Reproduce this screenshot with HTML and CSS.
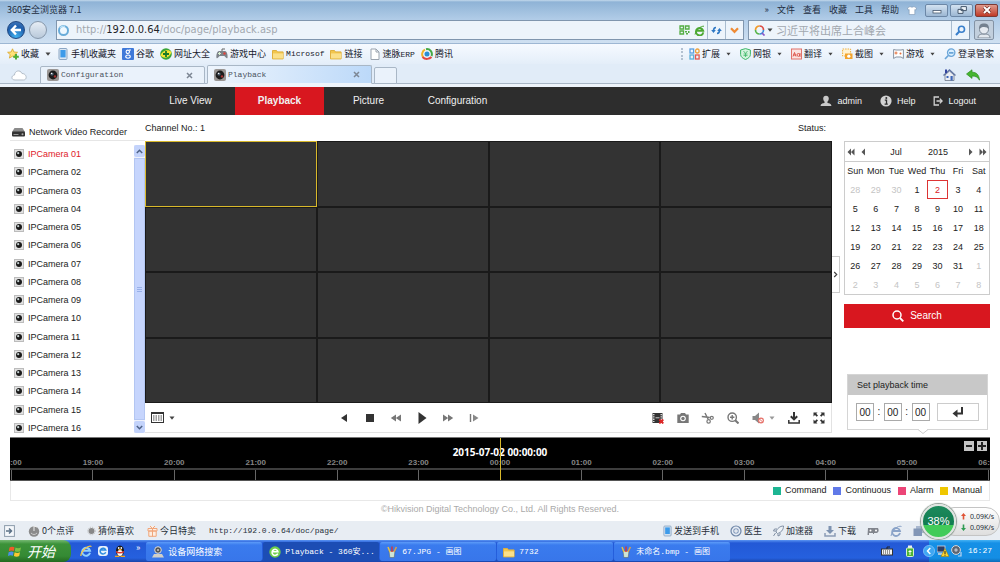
FILE: index.html
```html
<!DOCTYPE html>
<html lang="en">
<head>
<meta charset="utf-8">
<title>Playback</title>
<link rel="stylesheet" href="styles.css">
</head>
<body>
<svg class="defs" aria-hidden="true">
  <symbol id="cam" viewBox="0 0 10 10"><rect x=".5" y=".5" width="9" height="9" fill="#e2e2e2" stroke="#bcbcbc"/><circle cx="5" cy="5" r="3" fill="#1a1a1a"/><circle cx="4.200" cy="4.200" r="1.100" fill="#c4d0d0"/></symbol>
  <symbol id="lens" viewBox="0 0 12 12"><rect width="12" height="12" rx="2" fill="#9a9694"/><circle cx="6" cy="6" r="4.400" fill="#1c1c1c"/><circle cx="5" cy="5" r="1.600" fill="#567"/><circle cx="8" cy="7.400" r="1.200" fill="#a33"/><circle cx="4.600" cy="4.400" r=".7" fill="#fff"/></symbol>
  <symbol id="folder" viewBox="0 0 12 12"><path d="M.5 2.500h4l1 1.400h5.600v7H.5z" fill="#f2c64d" stroke="#dfb040"/><path d="M1 5.400h10v5H1z" fill="#fbe08a"/></symbol>
  <symbol id="caret" viewBox="0 0 6 4"><path d="M.5.5h5L3 3.700z" fill="currentColor"/></symbol>
  <symbol id="paint" viewBox="0 0 12 12"><path d="M3 5h6l-.8 6.500H3.800z" fill="#cfe4d4" stroke="#567" stroke-width=".6"/><path d="M4 6 2 1" stroke="#e8c040" stroke-width="1.500"/><path d="M6 6V.5" stroke="#d33" stroke-width="1.400"/><path d="m8 6 2.400-5" stroke="#d9a04a" stroke-width="1.600"/></symbol>
  <symbol id="phone" viewBox="0 0 10 12"><rect x="1" y=".5" width="8" height="11" rx="1" fill="#dbe7f3" stroke="#8ba6c4"/><rect x="2.400" y="2" width="5.200" height="7.400" fill="#3d9bea"/></symbol>
</svg>

<header class="browser">
  <div class="titlebar">
    <span class="title">360安全浏览器 7.1</span>
    <nav class="menus"><button>»</button><button>文件</button><button>查看</button><button>收藏</button><button>工具</button><button>帮助</button>
      <button aria-label="Skins"><svg width="10" height="9" viewBox="0 0 10 9"><path d="M3 .6Q5 2 7 .6L9.600 2 8.600 4 7.800 3.600V8.500H2.200V3.600L1.400 4 .4 2z" fill="#fff" stroke="#6d87a5" stroke-width=".5"/></svg></button>
    </nav>
    <div class="wincontrols">
      <button aria-label="Minimize"><svg width="10" height="8" viewBox="0 0 10 8"><rect x="1" y="4.500" width="8" height="2.500" fill="#fff" stroke="#46586d" stroke-width=".8"/></svg></button>
      <button aria-label="Restore"><svg width="10" height="8" viewBox="0 0 10 8"><path d="M4 .6h5.400v4H4zM1 3.400h5v4H1z" fill="#eef4fa" stroke="#46586d"/></svg></button>
      <button class="close" aria-label="Close"><svg width="10" height="8" viewBox="0 0 10 8"><path d="m2 1 6 6M8 1 2 7" stroke="#6e2a22" stroke-width="3.200"/><path d="m2 1 6 6M8 1 2 7" stroke="#fff" stroke-width="2"/></svg></button>
    </div>
  </div>

  <div class="addressrow">
    <button class="round back" aria-label="Back"><svg width="12" height="12" viewBox="0 0 12 12"><path d="M11 6H2M6 1.500 1.800 6 6 10.500" fill="none" stroke="#fff" stroke-width="2.400"/></svg></button>
    <button class="round" aria-label="Forward"></button>
    <div class="address">
      <svg width="13" height="13" viewBox="0 0 13 13"><circle cx="6.500" cy="6.500" r="4.500" fill="#eef8ff" stroke="#69acd9" stroke-width="2"/><path d="M3 4A4.500 4.500 0 0 1 8 2.400" fill="none" stroke="#b9e0f7" stroke-width="1.400"/></svg>
      <span class="url">http://<b>192.0.0.64</b>/doc/page/playback.asp</span>
      <button class="tool" aria-label="QR code"><svg width="11" height="10" viewBox="0 0 11 10"><path d="M1 1h3.500v3H1zM6.500 1H10v3H6.500zM1 6h3.500v3H1z" fill="none" stroke="#53ad43" stroke-width="1.300"/><path d="M6 6h2v1.500H6zM9 6h1.500v2H9zM7 8h2v1.500H7z" fill="#53ad43"/></svg></button>
      <button class="tool" aria-label="Compatibility"><svg width="11" height="11" viewBox="0 0 11 11"><path d="M9.300 7.400A3.700 3.700 0 1 1 9.200 5.700H3" fill="none" stroke="#4ca832" stroke-width="1.900"/><path d="M1 9.500C2.500 4 7 1 10 1.200" fill="none" stroke="#4ca832"/></svg></button>
      <button class="seg" aria-label="Refresh"><svg width="11" height="11" viewBox="0 0 11 11"><path d="M5 2.500C3 2.500 2.500 4 2.500 6M6 8.500c2 0 2.500-1.500 2.500-3.500" fill="none" stroke="#2f78c4" stroke-width="1.600"/><path d="M.2 5h4.600L2.500 8zM6.200 6h4.600L8.500 3z" fill="#2f78c4"/></svg></button>
      <button class="seg" aria-label="History"><svg width="9" height="7" viewBox="0 0 9 7"><path d="m1 1.200 3.500 3.600L8 1.200" fill="none" stroke="#ef8b35" stroke-width="2.200"/></svg></button>
    </div>
    <div class="websearch">
      <svg width="12" height="12" viewBox="0 0 12 12" fill="none" stroke-width="1.700"><path d="M1.500 6A4 4 0 0 1 5.500 2" stroke="#f09b2a"/><path d="M5.500 2a4 4 0 0 1 4 4" stroke="#dd4c43"/><path d="M9.500 6a4 4 0 0 1-4 4" stroke="#3b8ddb"/><path d="M5.500 10a4 4 0 0 1-4-4" stroke="#58b548"/><path d="m8 9 2.500 2.500" stroke="#8a55c5"/></svg>
      <svg class="caret" width="6" height="4"><use href="#caret"/></svg>
      <input type="text" placeholder="习近平将出席上合峰会" aria-label="Web search">
      <button class="seg" aria-label="Search the web"><svg width="11" height="11" viewBox="0 0 11 11"><circle cx="6.500" cy="4.300" r="3" fill="none" stroke="#3a7fcb" stroke-width="1.600"/><path d="M4.300 6.500 1 10" stroke="#3a7fcb" stroke-width="2"/></svg></button>
    </div>
    <button class="avatar" aria-label="Account"><svg width="16" height="16" viewBox="0 0 16 16"><path d="M2 16c0-3 2-4 6-4s6 1 6 4z" fill="#e3e8ee" stroke="#7c8896"/><circle cx="8" cy="7.500" r="4.500" fill="#e6eaf0" stroke="#7c8896"/><path d="M3 7C3 2.500 5 1.500 8 1.500S13 2.500 13 7C11 4.500 6 4 3 7z" fill="#75818f"/></svg></button>
  </div>

  <div class="bookmarks">
    <div class="bookgroup">
      <a href="#"><svg width="12" height="12" viewBox="0 0 12 12"><path d="m5.500.8 1.400 3.200 3.600.3-2.700 2.300.8 3.500-3.100-1.900-3.100 1.900.8-3.500L.6 4.300l3.500-.3z" fill="#ffe27a" stroke="#d9a527" stroke-width=".8"/><path d="M9 6v5.600M6.200 8.800h5.600" stroke="#4fae38" stroke-width="2"/></svg>收藏<svg class="caret spaced" width="6" height="4"><use href="#caret"/></svg></a>
      <a href="#"><svg width="12" height="12"><use href="#phone"/></svg>手机收藏夹</a>
      <a href="#"><svg width="12" height="12" viewBox="0 0 12 12"><rect width="12" height="12" rx="1" fill="#3f79d9"/><circle cx="5.800" cy="3.800" r="1.700" fill="none" stroke="#fff" stroke-width="1.100"/><ellipse cx="6" cy="8.600" rx="2.300" ry="1.600" fill="none" stroke="#fff" stroke-width="1.100"/><path d="M7 2h2" stroke="#fff"/></svg>谷歌</a>
      <a href="#"><svg width="12" height="12" viewBox="0 0 12 12"><circle cx="6" cy="6" r="5.800" fill="#3aa536"/><path d="M.5 7.500C2 3 8 .5 11.500 4 10 9 5 12 .5 7.500z" fill="#f5e431"/><path d="M6 3v6M3 6h6" stroke="#1a7a28" stroke-width="1.800"/></svg>网址大全</a>
      <a href="#"><svg width="12" height="12" viewBox="0 0 12 12"><path d="M3 3h6c2 0 3 4 2.500 7-1.500 1-2.500-2-3.500-2H4c-1 0-2 3-3.500 2C0 7 1 3 3 3z" fill="#7d838a"/><path d="M3.500 4v3M2 5.500h3" stroke="#d9f0d0"/><circle cx="8.500" cy="5.500" r="1.200" fill="#e0433c"/><path d="M6 3V1h3" fill="none" stroke="#666"/></svg>游戏中心</a>
      <a href="#"><svg width="12" height="12"><use href="#folder"/></svg><span class="mono">Microsof</span></a>
      <a href="#"><svg width="12" height="12"><use href="#folder"/></svg>链接</a>
      <a href="#"><svg width="12" height="12" viewBox="0 0 12 12"><path d="M2 1h5l3 3v7.500H2z" fill="#fff" stroke="#9aa3ae"/><path d="M7 1v3h3" fill="none" stroke="#9aa3ae"/></svg><span>速脉<span class="mono">ERP</span></span></a>
      <a href="#"><svg width="12" height="12" viewBox="0 0 12 12" fill="none" stroke-width="2"><path d="M2 9A5 5 0 0 1 4 1.700" stroke="#f0b429"/><path d="M5 1.200A5 5 0 0 1 10.500 8" stroke="#45a845"/><path d="M1.500 9c3 3 7 2 9 0" stroke="#e1483e"/><circle cx="6" cy="6" r="1.500" fill="#2a8fd4" stroke="#2a8fd4"/></svg>腾讯</a>
    </div>
    <div class="bookgroup extras">
      <button><svg width="11" height="12" viewBox="0 0 11 12" fill="none" stroke-width="1.300"><rect x="1" y="1" width="3.600" height="4" stroke="#5b9fe0"/><rect x="6.500" y="1" width="3.600" height="4" rx="2" stroke="#eda23c"/><rect x="1" y="7" width="3.600" height="4" stroke="#5bb0d8"/><rect x="6.500" y="7" width="3.600" height="4" stroke="#e0584f"/></svg>扩展<svg class="caret spaced" width="5" height="4"><use href="#caret"/></svg></button>
      <button><svg width="11" height="12" viewBox="0 0 11 12"><path d="M5.500.6 10.400 2v4.500c0 2.500-2.400 4-4.900 5-2.500-1-4.900-2.500-4.900-5V2z" fill="#d4f3dd" stroke="#3fb768"/><path d="m3.500 3 2 2.500 2-2.500M5.500 5.500V9M3.500 6h4M3.500 7.600h4" fill="none" stroke="#3fb768" stroke-width=".8"/></svg>网银<svg class="caret spaced" width="5" height="4"><use href="#caret"/></svg></button>
      <button><svg width="11" height="12" viewBox="0 0 11 12"><rect x=".5" y="1" width="10" height="10" fill="#fbe3e0" stroke="#e2736b"/><path d="m2 8.500 1.500-4L5 8.500M2.500 7h2" fill="none" stroke="#d9483d" stroke-width=".9"/><circle cx="7.400" cy="6.900" r="1.400" fill="none" stroke="#d9483d" stroke-width=".9"/><path d="M9 5v4" stroke="#d9483d" stroke-width=".8"/></svg>翻译<svg class="caret spaced" width="5" height="4"><use href="#caret"/></svg></button>
      <button><svg width="11" height="12" viewBox="0 0 11 12"><rect x=".6" y="1" width="8" height="7" fill="#fff3d4" stroke="#eeb142" stroke-dasharray="1.500 1"/><rect x="3" y="5.500" width="7.500" height="5.500" fill="#f3a42f"/><circle cx="6.800" cy="8.200" r="1.600" fill="#fff"/></svg>截图<svg class="caret spaced" width="5" height="4"><use href="#caret"/></svg></button>
      <button><svg width="11" height="12" viewBox="0 0 11 12"><path d="M.6 1.500 3 2h5l2.400-.5v9L8 9H3L.6 10.500z" fill="#fff" stroke="#8793a3"/><path d="M3 3.500v3M1.500 5h3" stroke="#e4703d"/><circle cx="7.500" cy="5.500" r="1" fill="#e4703d"/></svg>游戏<svg class="caret spaced" width="5" height="4"><use href="#caret"/></svg></button>
      <button><svg width="12" height="12" viewBox="0 0 12 12"><circle cx="7.200" cy="4.600" r="3.700" fill="#d9efff" stroke="#6aa5d8" stroke-width="1.300"/><path d="M5 4.800h4.500M4.300 7.500 1 11" stroke="#6aa5d8" stroke-width="1.700"/></svg>登录管家</button>
    </div>
  </div>

  <div class="tabs">
    <button class="cloud" aria-label="Cloud"><svg width="16" height="12" viewBox="0 0 16 12"><path d="M4 11C0 11 0 6.500 3.500 6 3.500 2 9 0 11 4.500c5 0 5.500 6.500 1.500 6.500z" fill="#fff" stroke="#b3bdc8"/></svg></button>
    <a class="tab" href="#"><svg width="12" height="12"><use href="#lens"/></svg><span class="mono">Configuration</span><svg class="x" width="7" height="7" viewBox="0 0 7 7"><path d="m1 1 5 5M6 1 1 6" stroke="#7d8794" stroke-width="1.500"/></svg></a>
    <a class="tab active" href="#"><svg width="12" height="12"><use href="#lens"/></svg><span class="mono">Playback</span><svg class="x" width="7" height="7" viewBox="0 0 7 7"><path d="m1 1 5 5M6 1 1 6" stroke="#7d8794" stroke-width="1.500"/></svg></a>
    <button class="newtab" aria-label="New tab"></button>
    <span class="tabtools">
      <button aria-label="Home"><svg width="13" height="12" viewBox="0 0 13 12"><path d="M2 6v5.500h9V6L6.500 2z" fill="#e9edf5" stroke="#6d7686" stroke-width=".8"/><path d="M.5 6.500 6.500 1l6 5.500" fill="none" stroke="#6478a4" stroke-width="1.500"/><rect x="2" y=".5" width="2" height="3.500" fill="#3444a0"/><rect x="3.500" y="7" width="2" height="2" fill="#3c66b8"/><rect x="7.500" y="7" width="2.200" height="4.500" fill="#3c66b8"/></svg></button>
      <button aria-label="Undo close"><svg width="14" height="12" viewBox="0 0 14 12"><path d="M.5 5 6 .8v2.400c4.500 0 7 2.500 7.500 8C12 8.200 9.500 7 6 7v2.400z" fill="#45b52f" stroke="#2f8d20" stroke-width=".7"/></svg></button>
    </span>
  </div>
</header>

<nav class="mainnav">
  <a href="#">Live View</a><a class="current" href="#">Playback</a><a href="#">Picture</a><a href="#">Configuration</a>
  <div class="account">
    <a href="#"><svg width="12" height="12" viewBox="0 0 12 12"><path d="M6 .8c1.800 0 2.800 1.200 2.800 2.800S8 6.200 7.400 6.800v.9c1.400.5 4 .8 4 3.300H.6c0-2.500 2.600-2.800 4-3.300v-.9C4 6.200 3.200 5.200 3.200 3.600S4.200.8 6 .8z" fill="#c9c9c9"/></svg>admin</a>
    <a href="#"><svg width="12" height="12" viewBox="0 0 12 12"><circle cx="6" cy="6" r="5.600" fill="#d2d2d2"/><circle cx="6.300" cy="3" r="1" fill="#2d2d2d"/><path d="M4.800 5.200h1.700v4M4.600 9.200h3.200" fill="none" stroke="#2d2d2d" stroke-width="1.300"/></svg>Help</a>
    <a href="#"><svg width="10" height="12" viewBox="0 0 10 12"><path d="M6 2H1.200v8H6" fill="none" stroke="#d2d2d2" stroke-width="1.300"/><path d="M3.500 6H9M6.800 3.600 9.200 6 6.800 8.400" fill="none" stroke="#d2d2d2" stroke-width="1.300"/></svg>Logout</a>
  </div>
</nav>

<main class="playback">
  <aside class="devices">
    <h2><svg width="13" height="10" viewBox="0 0 13 10"><path d="M2.500 1h8L13 5H0z" fill="#8b8b8b"/><rect y="4.500" width="13" height="5" rx="1" fill="#333"/><path d="M1.500 7.500h5" stroke="#999"/><circle cx="10.500" cy="7.200" r="1" fill="#aaa"/></svg>Network Video Recorder</h2>
    <div class="listwrap">
      <ul>
        <li class="on"><svg><use href="#cam"/></svg>IPCamera 01</li>
        <li><svg><use href="#cam"/></svg>IPCamera 02</li>
        <li><svg><use href="#cam"/></svg>IPCamera 03</li>
        <li><svg><use href="#cam"/></svg>IPCamera 04</li>
        <li><svg><use href="#cam"/></svg>IPCamera 05</li>
        <li><svg><use href="#cam"/></svg>IPCamera 06</li>
        <li><svg><use href="#cam"/></svg>IPCamera 07</li>
        <li><svg><use href="#cam"/></svg>IPCamera 08</li>
        <li><svg><use href="#cam"/></svg>IPCamera 09</li>
        <li><svg><use href="#cam"/></svg>IPCamera 10</li>
        <li><svg><use href="#cam"/></svg>IPCamera 11</li>
        <li><svg><use href="#cam"/></svg>IPCamera 12</li>
        <li><svg><use href="#cam"/></svg>IPCamera 13</li>
        <li><svg><use href="#cam"/></svg>IPCamera 14</li>
        <li><svg><use href="#cam"/></svg>IPCamera 15</li>
        <li><svg><use href="#cam"/></svg>IPCamera 16</li>
      </ul>
      <div class="scroll">
        <button aria-label="Scroll up"><svg width="7" height="5" viewBox="0 0 7 5"><path d="M.8 4 3.500 1.300 6.200 4" fill="none" stroke="#4d6185" stroke-width="1.500"/></svg></button>
        <div class="thumb"><i></i><i></i><i></i></div>
        <button aria-label="Scroll down"><svg width="7" height="5" viewBox="0 0 7 5"><path d="M.8 1 3.500 3.700 6.200 1" fill="none" stroke="#4d6185" stroke-width="1.500"/></svg></button>
      </div>
    </div>
  </aside>

  <section class="viewer">
    <div class="viewhead"><span>Channel No.: 1</span><span>Status:</span></div>
    <div class="screens">
      <div class="picked"></div><div></div><div></div><div></div>
      <div></div><div></div><div></div><div></div>
      <div></div><div></div><div></div><div></div>
      <div></div><div></div><div></div><div></div>
    </div>
    <div class="controls">
      <div class="group">
        <button class="wide" aria-label="Window division"><svg width="13" height="11" viewBox="0 0 13 11"><rect x=".5" y=".5" width="12" height="10" fill="#fff" stroke="#333"/><path d="M0 1.500h13" stroke="#333"/><path d="M2 4h9M2 6h9M2 8h9" stroke="#444" stroke-width="1.200" stroke-dasharray="1.500 1"/></svg><svg class="caret" width="6" height="4"><use href="#caret"/></svg></button>
      </div>
      <div class="group">
        <button aria-label="Reverse"><svg width="12" height="12" viewBox="0 0 12 12"><path d="M9 2v8L3 6z" fill="#333"/></svg></button>
        <button aria-label="Stop"><svg width="12" height="12" viewBox="0 0 12 12"><path d="M2 2h8v8H2z" fill="#333"/></svg></button>
        <button aria-label="Slow"><svg width="12" height="12" viewBox="0 0 12 12"><path d="M6 2.500v7L.8 6zM11 2.500v7L5.800 6z" fill="#777"/></svg></button>
        <button aria-label="Play"><svg width="12" height="12" viewBox="0 0 12 12"><path d="M2.500 0v12L10.500 6z" fill="#333"/></svg></button>
        <button aria-label="Fast"><svg width="12" height="12" viewBox="0 0 12 12"><path d="M1 2.500v7L6.200 6zM6 2.500v7L11.200 6z" fill="#777"/></svg></button>
        <button aria-label="Single frame"><svg width="12" height="12" viewBox="0 0 12 12"><path d="M2.500 2v8" stroke="#777" stroke-width="1.400"/><path d="M5 2.500v7L10.500 6z" fill="#888"/></svg></button>
      </div>
      <div class="group last">
        <button aria-label="Stop all playback"><svg width="12" height="12" viewBox="0 0 12 12"><path d="M.5 1h10v10H.5z" fill="#333"/><path d="M1.800 2v8M9.200 2v8" stroke="#fff" stroke-width="1.200" stroke-dasharray="1.300 1"/><path d="M3.500 5.800h4" stroke="#ccc"/><path d="m7.300 7.500 4 4M11.300 7.500l-4 4" stroke="#dc2626" stroke-width="1.800"/></svg></button>
        <button aria-label="Capture"><svg width="12" height="12" viewBox="0 0 12 12"><path d="M.3 2.500H3L4 1h4l1 1.500h2.700v8.500H.3z" fill="#777"/><circle cx="6" cy="6.500" r="2.800" fill="#fff"/><circle cx="6" cy="6.500" r="1.700" fill="#777"/></svg></button>
        <button aria-label="Clip"><svg width="13" height="12" viewBox="0 0 13 12" fill="none" stroke="#777"><path d="M4 1l3 6M.8 4.500l8 1" stroke-width="1.400"/><circle cx="10.800" cy="5.800" r="1.500" stroke-width="1.200"/><circle cx="7.600" cy="9.400" r="1.700" stroke-width="1.200"/></svg></button>
        <button aria-label="Zoom"><svg width="12" height="12" viewBox="0 0 12 12" fill="none" stroke="#777"><circle cx="5.200" cy="5.200" r="4.200" stroke-width="1.400"/><path d="m8.200 8.200 3.300 3.300" stroke-width="2"/><path d="M5.200 3v4.400M3 5.200h4.400" stroke-width="1.400"/></svg></button>
        <button class="wide faded" aria-label="Volume"><svg width="12" height="12" viewBox="0 0 12 12"><path d="M.5 4H3l4-3.500v11L3 8H.5z" fill="#888"/><circle cx="9" cy="8.500" r="2.400" fill="#fff" stroke="#e67068" stroke-width="1.200"/><path d="m7.400 7 3.300 3" stroke="#e67068"/></svg><svg class="caret" width="6" height="4"><use href="#caret"/></svg></button>
        <button aria-label="Download"><svg width="12" height="12" viewBox="0 0 12 12"><path d="M6 0v7M2.800 4.200 6 7.400l3.200-3.200" fill="none" stroke="#333" stroke-width="2"/><path d="M.8 8v3h10.400V8" fill="none" stroke="#333" stroke-width="1.500"/></svg></button>
        <button aria-label="Full screen"><svg width="12" height="12" viewBox="0 0 12 12"><path d="M.5.500h4L3.300 1.800l1.700 1.700L3.700 4.800 2 3.100.5 4.500zM11.500.500v4L10 3.100 8.300 4.800 7 3.500l1.700-1.700L7.500.500zM.500 11.500v-4L2 8.900l1.700-1.700L5 8.500l-1.700 1.700 1.200 1.300zM11.500 11.500h-4l1.200-1.300L7 8.500l1.300-1.300L10 8.900l1.500-1.400z" fill="#333"/></svg></button>
      </div>
    </div>
  </section>

  <button class="collapse" aria-label="Collapse calendar"><svg width="5" height="7" viewBox="0 0 5 7"><path d="m1.200 1 2.500 2.500L1.200 6" fill="none" stroke="#444" stroke-width="1.200"/></svg></button>

  <aside class="dates">
    <div class="calendar">
      <div class="month">
        <button aria-label="Previous year"><svg width="8" height="8" viewBox="0 0 8 8"><path d="M4 .5v7L.5 4zM7.500.5v7L4 4z" fill="#555"/></svg></button>
        <button aria-label="Previous month"><svg width="8" height="8" viewBox="0 0 8 8"><path d="M6 .5v7L2.500 4z" fill="#555"/></svg></button>
        <div class="period"><span>Jul</span><span>2015</span></div>
        <button aria-label="Next month"><svg width="8" height="8" viewBox="0 0 8 8"><path d="M2 .5v7L5.500 4z" fill="#555"/></svg></button>
        <button aria-label="Next year"><svg width="8" height="8" viewBox="0 0 8 8"><path d="M.5.500v7L4 4zM4 .5v7L7.500 4z" fill="#555"/></svg></button>
      </div>
      <table>
        <thead><tr><th>Sun</th><th>Mon</th><th>Tue</th><th>Wed</th><th>Thu</th><th>Fri</th><th>Sat</th></tr></thead>
        <tbody>
          <tr><td class="out">28</td><td class="out">29</td><td class="out">30</td><td>1</td><td class="today">2</td><td>3</td><td>4</td></tr>
          <tr><td>5</td><td>6</td><td>7</td><td>8</td><td>9</td><td>10</td><td>11</td></tr>
          <tr><td>12</td><td>13</td><td>14</td><td>15</td><td>16</td><td>17</td><td>18</td></tr>
          <tr><td>19</td><td>20</td><td>21</td><td>22</td><td>23</td><td>24</td><td>25</td></tr>
          <tr><td>26</td><td>27</td><td>28</td><td>29</td><td>30</td><td>31</td><td class="out">1</td></tr>
          <tr><td class="out">2</td><td class="out">3</td><td class="out">4</td><td class="out">5</td><td class="out">6</td><td class="out">7</td><td class="out">8</td></tr>
        </tbody>
      </table>
    </div>
    <button class="search"><svg width="12" height="12" viewBox="0 0 12 12"><circle cx="5" cy="5" r="4" fill="none" stroke="#fff" stroke-width="1.500"/><path d="m8 8 3.300 3.300" stroke="#fff" stroke-width="1.800"/></svg>Search</button>
    <div class="settime">
      <h3>Set playback time</h3>
      <div class="fields">
        <input type="text" value="00" aria-label="Hour"><span>:</span><input type="text" value="00" aria-label="Minute"><span>:</span><input type="text" value="00" aria-label="Second">
        <button aria-label="Go to time"><svg width="12" height="11" viewBox="0 0 12 11"><path d="M10 0v6.500H4" fill="none" stroke="#333" stroke-width="2"/><path d="M5.500 2.500v8L.5 6.500z" fill="#333"/></svg></button>
      </div>
      <svg class="pointer" width="10" height="5" viewBox="0 0 10 5"><path d="M0 0h10L5 4.500z" fill="#fff"/><path d="m0 .5 5 4 5-4" fill="none" stroke="#ccc"/></svg>
    </div>
  </aside>
</main>

<section class="timeline">
  <time>2015-07-02 00:00:00</time>
  <div class="hours"><span>18:00</span><span>19:00</span><span>20:00</span><span>21:00</span><span>22:00</span><span>23:00</span><span>00:00</span><span>01:00</span><span>02:00</span><span>03:00</span><span>04:00</span><span>05:00</span><span>06:00</span></div>
  <div class="zoom"><button aria-label="Zoom out"><svg width="8" height="8" viewBox="0 0 8 8"><path d="M1 4h6" stroke="#222" stroke-width="2"/></svg></button><button aria-label="Zoom in"><svg width="8" height="8" viewBox="0 0 8 8"><path d="M0 4h8M4 0v8" stroke="#222" stroke-width="2"/></svg></button></div>
  <div class="cursor"></div>
</section>
<div class="legend"><span class="command">Command</span><span class="continuous">Continuous</span><span class="alarm">Alarm</span><span class="manual">Manual</span></div>
<footer class="copyright">©Hikvision Digital Technology Co., Ltd. All Rights Reserved.</footer>

<div class="statusbar">
  <div class="left">
    <button aria-label="Sidebar"><svg width="11" height="12" viewBox="0 0 11 12"><rect x=".6" y=".6" width="9.800" height="10.800" fill="#f5f8fb" stroke="#8c9cab"/><path d="M2 6h5M5 3.500 7.500 6 5 8.500" fill="none" stroke="#5c7187" stroke-width="1.500"/></svg></button>
    <button><svg width="12" height="12" viewBox="0 0 12 12"><circle cx="6" cy="6.500" r="5.200" fill="#8b8b8b"/><path d="M6 6V1l3 1" stroke="#eee" fill="none"/><path d="M3 8c2 2 4 2 6 0" stroke="#ccc" fill="none"/></svg>0个点评</button>
    <button><svg width="9" height="12" viewBox="0 0 9 12"><circle cx="4.500" cy="6" r="3" fill="#888"/><circle cx="4.500" cy="6" r="3.800" fill="none" stroke="#bbb" stroke-dasharray="1 1"/></svg>猜你喜欢</button>
    <button><svg width="11" height="12" viewBox="0 0 11 12"><path d="M1 3.500h9V6H1zM1.800 6h7.400v5.300H1.800zM5.500 3.500v8M3 1l2.500 2.500L8 1" fill="#fdeee2" stroke="#f0a57a"/></svg>今日特卖</button>
    <span class="mono">http://192.0.0.64/doc/page/</span>
  </div>
  <div class="right">
    <button><svg width="9" height="12"><use href="#phone"/></svg>发送到手机</button>
    <button><svg width="12" height="12" viewBox="0 0 12 12"><circle cx="6" cy="6" r="5" fill="#e6ecf4" stroke="#6f87a8" stroke-width="1.200"/><circle cx="6" cy="6" r="2.800" fill="#8aa0bf"/><path d="M6 4v4M4 6h4" stroke="#fff"/></svg>医生</button>
    <button><svg width="11" height="12" viewBox="0 0 11 12"><path d="M10.500 1C7 1 4 3.500 3 7l1.500 1.500C8 7.500 10.500 5 10.500 1zM4 4H1.500L.5 6H3M7 8v2L5 11V9M2.500 8 .5 11" fill="#eef2f7" stroke="#74859b" stroke-width=".9"/></svg>加速器</button>
    <button><svg width="12" height="12" viewBox="0 0 12 12"><path d="M4.500 1h3v4H10L6 9 2 5h2.500z" fill="#7d92b0"/><path d="M1 8v3h10V8" fill="none" stroke="#8a9cb6" stroke-width="1.500"/></svg>下载</button>
    <button aria-label="Gamepad"><svg width="12" height="12" viewBox="0 0 12 12"><path d="M1 3h10c1 2 1 4-1 5H7v1H6V8H2v2H.5z" fill="#81858d"/><circle cx="3.500" cy="5.500" r="1" fill="#fff"/><circle cx="9" cy="5.500" r="1" fill="#fff"/></svg></button>
    <button aria-label="Compatible mode"><svg width="12" height="12" viewBox="0 0 12 12"><path d="M10 8A4 4 0 1 1 10 6H3" fill="none" stroke="#8aa3c8" stroke-width="1.800"/><path d="M1 11C2 5 8 0 11.500 1.500" fill="none" stroke="#8aa3c8"/></svg></button>
    <button aria-label="Windows"><svg width="12" height="12" viewBox="0 0 12 12"><rect x="3" y="1" width="8.500" height="7" fill="#a9b8cf"/><rect x=".5" y="3.500" width="8.500" height="7.500" fill="#8296b6"/></svg></button>
  </div>
  <div class="speed">
    <div class="rates"><span><svg width="5" height="7" viewBox="0 0 5 7"><path d="M2.500 0 5 3H3.300v3.500H1.700V3H0z" fill="#e05436"/></svg>0.09K/s</span><span><svg width="5" height="7" viewBox="0 0 5 7"><path d="M2.500 7 0 4h1.700V.5h1.600V4H5z" fill="#2f9d54"/></svg>0.09K/s</span></div>
    <div class="ball">38%</div>
  </div>
</div>

<div class="taskbar">
  <button class="start"><svg width="14" height="13" viewBox="0 0 14 13"><path d="M1.500 2.500Q4 1 6.500 2.300L5.800 6Q3.500 5 .8 6.200z" fill="#ee5a2b"/><path d="M7.500 2.600Q10 4 13 2.500L12.200 6.200Q9.500 7.500 6.800 6.200z" fill="#7cc243"/><path d="M.6 7.200Q3.500 6 5.600 7l-.7 3.800Q2.500 9.800 0 11z" fill="#4a90e8"/><path d="M6.600 7.300q2.800 1.300 5.400 0l-.8 3.700q-2.500 1.300-5.300 0z" fill="#fbc931"/></svg>开始</button>
  <div class="quick">
    <button aria-label="Internet Explorer"><svg width="12" height="12" viewBox="0 0 12 12"><path d="M10 7.800A4 4 0 1 1 10 5.700H3" fill="none" stroke="#8fd0ff" stroke-width="2"/><path d="M.8 11C1 6 8 0 11.500 1.500" fill="none" stroke="#f3c54a" stroke-width="1.200"/></svg></button>
    <button aria-label="Outlook"><svg width="12" height="12" viewBox="0 0 12 12"><rect x="1" y="1" width="10" height="10" rx="3" fill="#e8f2fc"/><path d="M8.700 7.200A2.900 2.900 0 1 1 8.700 5H4" fill="none" stroke="#2f8de0" stroke-width="1.500"/></svg></button>
    <button aria-label="QQ"><svg width="12" height="12" viewBox="0 0 12 12"><ellipse cx="6" cy="6" rx="4" ry="5.500" fill="#181818"/><ellipse cx="6" cy="8" rx="2.700" ry="3" fill="#fff"/><path d="M2 6q4 2 8 0v1.500q-4 2-8 0z" fill="#e23a2e"/><circle cx="4.700" cy="3" r=".9" fill="#fff"/><circle cx="7.300" cy="3" r=".9" fill="#fff"/><path d="M1 11.300h4.500M6.500 11.300H11M4.500 4.700h3" stroke="#f4a51f" stroke-width="1.300"/></svg></button>
    <button class="more">»</button>
  </div>
  <div class="tasks">
    <button><svg width="12" height="12" viewBox="0 0 12 12"><circle cx="6" cy="4" r="3.300" fill="#555" stroke="#ddd"/><circle cx="6" cy="4" r="1" fill="#ccc"/><path d="M2 8h8l2 3.500H0z" fill="#d2d0c8"/></svg>设备网络搜索</button>
    <button class="pressed"><svg width="12" height="12" viewBox="0 0 12 12"><circle cx="6" cy="6" r="5.700" fill="#6fce4c"/><path d="M8.800 7.600A3 3 0 1 1 9 5.800H3.500" fill="none" stroke="#fff" stroke-width="1.500"/></svg><span class="mono">Playback - 360安...</span></button>
    <button><svg width="12" height="12"><use href="#paint"/></svg><span class="mono">67.JPG - 画图</span></button>
    <button><svg width="12" height="12"><use href="#folder"/></svg><span class="mono">7732</span></button>
    <button><svg width="12" height="12"><use href="#paint"/></svg><span class="mono">未命名.bmp - 画图</span></button>
  </div>
  <div class="devicesicons">
    <svg width="12" height="12" viewBox="0 0 12 12"><rect x=".5" y="4" width="11" height="6" fill="#f2f2f2" stroke="#333"/><path d="M2 6h8M2 8h8" stroke="#333" stroke-dasharray="1 1"/><path d="M6 4V2h3" stroke="#222" fill="none"/></svg>
    <svg width="10" height="12" viewBox="0 0 10 12"><rect x="3" y=".5" width="4" height="3" fill="#eee"/><rect x="1.500" y="3" width="7" height="8.500" rx="1" fill="#4db535" stroke="#d7f0cf"/><path d="M5 5v5M3.500 6.500h3" stroke="#fff"/></svg>
  </div>
  <div class="tray">
    <button class="expand" aria-label="Show hidden icons"><svg width="12" height="12" viewBox="0 0 12 12"><circle cx="6" cy="6" r="5.600" fill="#3fa7f3" stroke="#9ad4ff" stroke-width=".6"/><path d="M7.300 3 4.500 6l2.800 3" fill="none" stroke="#fff" stroke-width="1.500"/></svg></button>
    <svg width="12" height="12" viewBox="0 0 12 12"><rect y="1" width="8" height="6" fill="#2d3f66" stroke="#cfd8e8" stroke-width=".8"/><path d="M1 9h6" stroke="#ddd" stroke-width="1.500"/><path d="m8 3.500 4 8H4z" fill="#ffd52e" stroke="#9a7800" stroke-width=".5"/><path d="M8 6v3M8 9.700v1" stroke="#222"/></svg>
    <svg width="12" height="12" viewBox="0 0 12 12"><circle cx="5" cy="5" r="4.400" fill="#5d6470" stroke="#d3d8df"/><circle cx="5" cy="5" r="1.700" fill="#b8bec8"/><path d="M10 7v4H7" fill="none" stroke="#bcd5ef" stroke-width="1.200"/></svg>
    <span class="mono">16:27</span>
  </div>
</div>
</body>
</html>
```

FILE: styles.css
```css
* { box-sizing: border-box; }

body {
  margin: 0;
  min-height: 100vh;
  display: flex;
  flex-direction: column;
  background: #fff;
  color: #222;
  font: 9px/12px "Liberation Sans", "Noto Sans CJK SC", sans-serif;
  overflow-x: hidden;
}

button, input {
  margin: 0;
  padding: 0;
  border: 0;
  background: none;
  color: inherit;
  font: inherit;
}

button {
  display: flex;
  align-items: center;
  justify-content: center;
  white-space: nowrap;
}

a { color: inherit; text-decoration: none; }
svg { display: block; flex: none; }
.defs { position: absolute; width: 0; height: 0; }
.mono { font-family: "Liberation Mono", "Noto Sans CJK SC", monospace; font-size: 8px; }

/* Browser frame */
.browser {
  font-family: "Noto Sans CJK SC", sans-serif;
  background: #e1ecf8;
}

.titlebar {
  display: flex;
  align-items: center;
  height: 20px;
  padding: 0 2px 0 7px;
  background: linear-gradient(#c4d9ec 0, #8fb3d6 2px, #b2cde8);
  color: #1d2c3e;
}

.title { flex: 1; }
.menus { display: flex; gap: 8px; margin-right: 8px; }
.wincontrols { display: flex; gap: 2px; }

.wincontrols button {
  width: 23px;
  height: 13px;
  border: 1px solid #6c87a6;
  border-radius: 2px;
  background: linear-gradient(#d3e2f1, #9cb7d3);
}

.wincontrols .close {
  border-color: #7d3a35;
  background: linear-gradient(#e09b8e, #c03a27);
}

.addressrow {
  display: flex;
  align-items: center;
  gap: 4px;
  height: 24px;
  padding: 0 6px 3px 7px;
  border-bottom: 1px solid #9db7d3;
  background: linear-gradient(#b2cde8, #cfe0f1);
}

.round {
  width: 18px;
  height: 18px;
  border: 1px solid #8798ab;
  border-radius: 50%;
  background: linear-gradient(#e6edf5, #b9c9da);
}

.round.back {
  border-color: #1f4680;
  background: radial-gradient(circle at 50% 90%, #41b2ef, #1e5fae 60%, #4a7cba);
}

.address, .websearch {
  display: flex;
  align-items: center;
  height: 20px;
  border: 1px solid #8096ae;
  background: #edf4fb;
}

.address { flex: 1; margin-left: 5px; }

.url {
  flex: 1;
  padding-left: 6px;
  color: #a2a8af;
  font: 11px/18px "DejaVu Sans Condensed", "Noto Sans", sans-serif;
}

.url b { color: #1f2429; font-weight: 400; }
.tool { width: 15px; }
.seg { align-self: stretch; width: 18px; border-left: 1px solid #a9bccf; }
.websearch { width: 222px; padding-left: 5px; }
.websearch .caret { margin: 0 3px 0 1px; }

.websearch input {
  flex: 1;
  min-width: 0;
  font-size: 11px;
  line-height: 16px;
}

.websearch input::placeholder { color: #a2a8af; opacity: 1; }

.avatar {
  width: 20px;
  height: 20px;
  border: 1px solid #8493a5;
  border-radius: 2px;
  background: #c2cfdd;
}

.bookmarks {
  display: flex;
  align-items: center;
  justify-content: space-between;
  height: 20px;
  padding: 0 6px 0 7px;
  background: linear-gradient(#f6faff, #e4eef9);
  color: #17202b;
}

.bookgroup { display: flex; gap: 6px; }
.bookgroup.extras { gap: 9px; padding-left: 6px; border-left: 2px dotted #b3c1d1; }
.bookgroup a, .bookgroup button { display: flex; align-items: center; gap: 2px; }
.caret { color: #444; }
.caret.spaced { margin-left: 4px; }

.tabs {
  display: flex;
  align-items: flex-end;
  gap: 2px;
  height: 23px;
  border-bottom: 3px solid #eef4fb;
  box-shadow: inset 0 -1px #a9b7c6;
}

.cloud { width: 38px; height: 18px; }

.tab {
  display: flex;
  align-items: center;
  gap: 2px;
  width: 165px;
  height: 18px;
  padding: 0 11px 0 6px;
  border: 1px solid #a9b7c6;
  border-radius: 2px 2px 0 0;
  background: #eaf2fb;
  color: #4a535e;
}

.tab.active { height: 19px; border-bottom-color: #eef4fb; background: linear-gradient(90deg, #eef5fd, #bcd9f9); }
.tab .x { margin-left: auto; }
.newtab { width: 23px; height: 17px; border: 1px solid #a9b7c6; border-radius: 2px 2px 0 0; background: #eaf2fb; }
.tabtools { display: flex; align-items: center; gap: 10px; height: 18px; margin-left: auto; padding-right: 20px; }

/* Recorder navigation */
.mainnav {
  display: flex;
  height: 28px;
  padding: 0 24px 0 146px;
  background: #2d2d2d;
  color: #f0f0f0;
  font-size: 10px;
  line-height: 27px;
  text-align: center;
}

.mainnav > a { width: 89px; }
.mainnav .current { background: #d8171f; font-weight: 700; }
.account { display: flex; gap: 18px; margin-left: auto; font-size: 9px; }
.account a { display: flex; align-items: center; gap: 5px; }

/* Playback page */
.playback {
  flex: 1;
  display: flex;
  padding: 0 10px 4px;
}

.devices { display: flex; flex-direction: column; width: 135px; }

.devices h2 {
  display: flex;
  align-items: center;
  gap: 4px;
  height: 26px;
  margin: 0;
  padding: 8px 0 0 2px;
  border-bottom: 1px solid #e6e6e6;
  font-size: 9px;
  font-weight: 400;
}

.listwrap { flex: 1; display: flex; justify-content: space-between; padding-top: 4px; }

.listwrap ul {
  display: flex;
  flex-direction: column;
  justify-content: space-between;
  margin: 0;
  padding: 4px 0 0 4px;
  list-style: none;
}

.listwrap li { display: flex; align-items: center; gap: 4px; line-height: 10px; }
.listwrap li svg { width: 10px; height: 10px; }
.listwrap .on { color: #e0202a; }
.scroll { display: flex; flex-direction: column; gap: 1px; width: 11px; background: #eef1fb; }
.scroll button { height: 12px; border-radius: 2px; background: #c3d3fb; }

.thumb {
  flex: 1;
  display: flex;
  flex-direction: column;
  align-items: center;
  justify-content: center;
  gap: 1px;
  border: 1px solid #b3c6f2;
  background: #c6d5fd;
}

.thumb i { width: 5px; height: 1px; background: #98b0e8; }

.viewer { flex: 1; display: flex; flex-direction: column; }
.viewhead { display: flex; justify-content: space-between; height: 26px; padding: 0 6px 0 0; line-height: 26px; }

.screens {
  flex: 1;
  display: grid;
  grid-template: repeat(4, 1fr) / repeat(4, 1fr);
  gap: 2px;
  padding: 1px;
  background: #1a1a1a;
}

.screens div { background: #333; }
.screens .picked { outline: 1px solid #d9b92b; }

.controls {
  display: grid;
  grid-template-columns: 186px auto 1fr;
  height: 30px;
  border: solid #e2e2e2;
  border-width: 0 1px 1px 0;
}

.group { display: flex; align-items: center; }
.group.last { justify-content: flex-end; }
.group button { width: 26px; height: 24px; }
.group.last button { width: 25px; }
.group .wide, .group.last .wide { gap: 5px; width: 36px; }
.faded .caret { color: #999; }

.collapse {
  align-self: center;
  width: 8px;
  height: 37px;
  margin-right: 4px;
  border: 1px solid #ccc;
  border-left: 0;
}

.dates { display: flex; flex-direction: column; width: 146px; padding-top: 26px; }
.calendar { border: 1px solid #ccc; }

.month {
  display: flex;
  align-items: center;
  height: 20px;
  border-bottom: 1px solid #ccc;
  text-align: center;
}

.month button { width: 12px; }
.period { flex: 1; display: flex; justify-content: center; }
.period span { width: 42px; }

.calendar table { width: 100%; table-layout: fixed; border-spacing: 0; text-align: center; }
.calendar th, .calendar td { height: 19px; padding: 0; border: 1px solid transparent; font-weight: 400; }
.calendar th { height: 18px; padding: 0; border-width: 0; }
.calendar .out { color: #c4c4c4; }
.calendar .today { border-color: #dd3333; color: #d8171f; }

.search {
  gap: 6px;
  height: 24px;
  margin-top: 9px;
  background: #d8171f;
  color: #fff;
  font-size: 10px;
}

.settime { position: relative; margin: auto 2px 3px 3px; border: 1px solid #d5d5d5; }
.settime h3 { margin: 0; padding: 0 9px; background: #c8c8c8; font-size: 9px; font-weight: 400; line-height: 20px; }
.fields { display: flex; align-items: center; justify-content: space-between; padding: 8px; font-size: 10px; }
.fields input { width: 18px; height: 18px; border: 1px solid #aaa; text-align: center; }
.fields button { width: 42px; height: 18px; margin-left: 4px; border: 1px solid #ccc; }
.pointer { position: absolute; left: 50%; top: 100%; }

.timeline {
  position: relative;
  height: 44px;
  margin: 0 10px;
  padding-top: 9px;
  border-top: 1px solid #777;
  border-bottom: 1px solid #555;
  background: #000;
  overflow: hidden;
  text-align: center;
}

.timeline time {
  display: block;
  color: #fff;
  font: 700 10px/11px "Noto Sans", sans-serif;
}

.hours {
  display: grid;
  grid-template-columns: repeat(13, 1fr);
  width: 108%;
  margin-left: -4%;
  color: #858585;
  font-size: 8px;
  font-weight: 700;
  line-height: 10px;
}

.hours span::after {
  content: "";
  display: block;
  height: 13px;
  border-top: 2px solid #3d3d3d;
  background: linear-gradient(#666, #666) center / 1px 100% no-repeat;
}

.zoom { position: absolute; top: 3px; right: 3px; display: flex; gap: 3px; }
.zoom button { width: 10px; height: 10px; background: #c4c4c4; }
.cursor { position: absolute; left: 50%; top: 0; width: 1px; height: 100%; background: #d9b92b; }

.legend {
  display: flex;
  justify-content: flex-end;
  gap: 7px;
  height: 20px;
  margin: 0 10px;
  padding-right: 7px;
  border: 1px solid #e8e8e8;
  border-top: 0;
  line-height: 19px;
}

.legend span { display: flex; align-items: center; gap: 4px; }
.legend span::before { content: ""; width: 8px; height: 8px; background: currentColor; }
.legend .command::before { background: #1db592; }
.legend .continuous::before { background: #6079e8; }
.legend .alarm::before { background: #ec4577; }
.legend .manual::before { background: #efc700; }

.copyright { height: 20px; color: #aaa; line-height: 16px; text-align: center; }

/* Browser status bar */
.statusbar {
  position: relative;
  display: flex;
  justify-content: space-between;
  height: 19px;
  padding: 0 75px 0 4px;
  background: #e8edf3;
  color: #27303a;
  font-family: "Noto Sans CJK SC", sans-serif;
}

.statusbar .left, .statusbar .right { display: flex; align-items: center; gap: 13px; }
.statusbar .right { gap: 11px; }
.statusbar button { gap: 2px; }

.speed { position: absolute; right: 0; bottom: 1px; display: flex; align-items: center; width: 79px; height: 35px; }

.rates {
  display: flex;
  flex-direction: column;
  justify-content: center;
  width: 60px;
  height: 29px;
  margin-left: auto;
  padding-left: 20px;
  border: 1px solid #c4c4c4;
  border-radius: 14px;
  background: linear-gradient(#fff, #dedede);
  font: 7px/11px "Noto Sans", sans-serif;
}

.rates span { display: flex; align-items: center; gap: 4px; white-space: nowrap; }

.ball {
  position: absolute;
  left: 0;
  top: 0;
  width: 35px;
  height: 35px;
  border: 2px solid #dfe5e1;
  border-radius: 50%;
  background: linear-gradient(#1c8a5c, #127c50 60%, #42cb59 60%);
  box-shadow: 0 0 1px 1px #8d9a92;
  color: #fff;
  font: 11px/31px "Liberation Sans", sans-serif;
  text-align: center;
}

/* Desktop taskbar */
.taskbar {
  display: flex;
  align-items: stretch;
  height: 22px;
  background: linear-gradient(#5a94f2, #2359d6 3px, #2560de 18px, #1a44a8);
  color: #fff;
  font-family: "Noto Sans CJK SC", sans-serif;
}

.start {
  gap: 5px;
  width: 71px;
  padding-right: 8px;
  border-radius: 0 8px 8px 0;
  background: linear-gradient(#76b972, #3c9239 4px, #358a34 16px, #23691f);
  font-size: 14px;
  font-style: italic;
  line-height: 20px;
}

.quick { display: flex; align-items: center; gap: 5px; padding: 0 6px 0 9px; }
.quick .more { padding: 0 0 6px 5px; }
.tasks { display: flex; gap: 1px; padding: 2px 0 1px; }

.tasks button {
  justify-content: flex-start;
  gap: 4px;
  width: 116px;
  padding-left: 6px;
  border-radius: 2px;
  background: linear-gradient(#5c9bf8, #3a7bee 3px, #3876ea);
}

.tasks .pressed { background: #1c4db4; }
.devicesicons { display: flex; align-items: center; gap: 12px; margin-left: auto; padding-right: 14px; }

.tray {
  display: flex;
  align-items: center;
  gap: 2px;
  padding-right: 8px;
  background: linear-gradient(#46b2f4, #1590e6 3px, #148ee4 18px, #0d6cb8);
}

.tray .mono { padding-left: 3px; }
.expand { margin-left: -6px; }
```
